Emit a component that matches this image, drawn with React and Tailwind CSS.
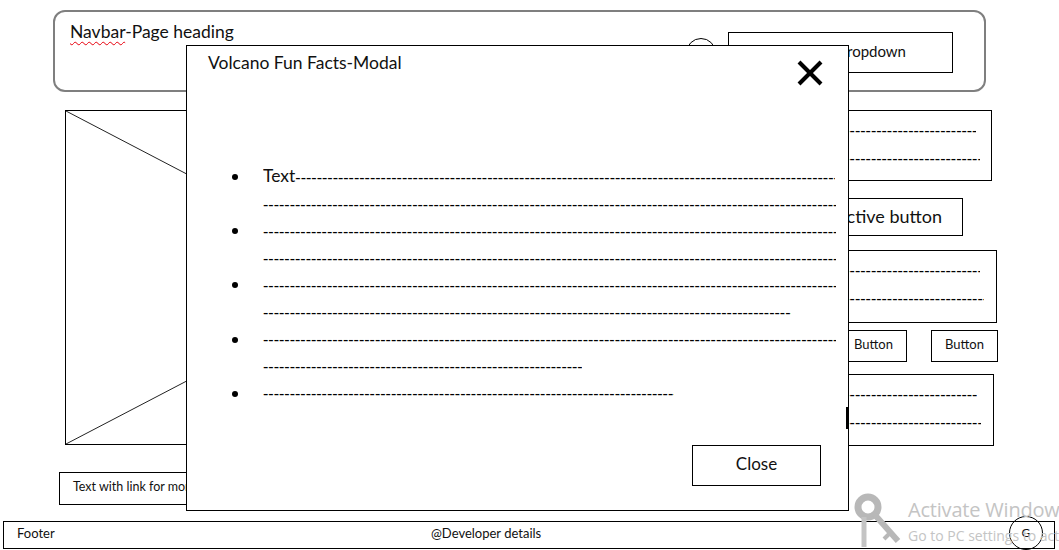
import React from "react";

const DASHES = "-".repeat(140);

function Dash({ w }) {
  return (
    <span
      className="inline-block overflow-hidden whitespace-nowrap align-baseline font-['Liberation_Sans',sans-serif] text-[16px] text-black"
      style={{ width: w }}
    >
      {DASHES}
    </span>
  );
}

function Line({ children }) {
  return (
    <div className="flex h-[27.1px] items-center whitespace-nowrap leading-[27.1px]">
      {children}
    </div>
  );
}

function Item({ lines }) {
  return (
    <div className="flex pl-[45px]">
      <div className="flex h-[27.1px] w-[31px] shrink-0 items-center">
        <div className="h-[6px] w-[6px] rounded-full bg-black" />
      </div>
      <div className="flex flex-col">{lines}</div>
    </div>
  );
}

function DashBox({ w, h, mt, l1, l2 }) {
  return (
    <div
      className="flex flex-col border border-black pl-[14px] pt-[6px]"
      style={{ width: w, height: h, marginTop: mt }}
    >
      <div className="flex h-[28px] items-center">
        <Dash w={l1} />
      </div>
      <div className="flex h-[28px] items-center">
        <Dash w={l2} />
      </div>
    </div>
  );
}

export default function App() {
  return (
    <div className="relative h-[550px] w-[1059px] overflow-hidden bg-white font-['Lato',sans-serif] text-[#111]">
      {/* Navbar */}
      <div className="ml-[53px] mt-[10px] flex h-[82px] w-[933px] justify-between rounded-[12px] border-2 border-[#7f7f7f]">
        <div className="pl-[15px] pt-[9px] text-[17.5px] leading-[22px]">
          <span className="underline decoration-red-600 decoration-wavy decoration-[1px] underline-offset-[3px]">
            Navbar
          </span>
          -Page heading
        </div>
        <div className="flex items-center gap-[12px] self-start pr-[31px] pt-[20px]">
          <div className="h-[30px] w-[30px] rounded-full border border-black" />
          <div className="flex h-[41px] w-[225px] items-center justify-end border border-black pb-[3px] pr-[46px] text-[15px]">
            Language Dropdown
          </div>
        </div>
      </div>

      {/* Main */}
      <div className="mt-[18px] flex">
        <div className="ml-[65px] w-[640px]">
          <div className="h-[335px] w-full border border-black">
            <svg
              className="block h-full w-full"
              viewBox="0 0 100 100"
              preserveAspectRatio="none"
            >
              <line x1="0" y1="0" x2="100" y2="100" stroke="#222" strokeWidth="1" vectorEffect="non-scaling-stroke" />
              <line x1="0" y1="100" x2="100" y2="0" stroke="#222" strokeWidth="1" vectorEffect="non-scaling-stroke" />
            </svg>
          </div>
          <div className="ml-[-6px] mt-[27px] flex h-[33px] w-[300px] items-center border border-black pb-[2px] pl-[13px] text-[12.5px]">
            Text with link for more information
          </div>
        </div>

        <div className="ml-[23px] flex w-[272px] flex-col">
          <DashBox w={264} h={71} mt={0} l1={233} l2={237} />
          <div className="mt-[17px] flex h-[38px] w-[235px] items-center justify-end border border-black pb-[2px] pr-[20px] text-[18px]">
            Active button
          </div>
          <DashBox w={269} h={73} mt={14} l1={237} l2={241} />
          <div className="mt-[7px] flex gap-[24px] pl-[112px]">
            <div className="flex h-[32px] w-[67px] items-center justify-center border border-black pb-[2px] text-[13px]">
              Button
            </div>
            <div className="flex h-[32px] w-[67px] items-center justify-center border border-black pb-[2px] text-[13px]">
              Button
            </div>
          </div>
          <DashBox w={266} h={72} mt={12} l1={234} l2={238} />
        </div>
      </div>

      {/* Footer */}
      <div className="relative ml-[3px] mt-[16px] flex h-[28px] w-[1052px] items-center border border-black pb-[2px] text-[13px]">
        <div className="w-[427px] pl-[13px]">Footer</div>
        <div>@Developer details</div>
        <div className="absolute right-[11px] top-[-6px] flex h-[34px] w-[34px] items-center justify-center rounded-full border border-black pb-[1px] text-[12px]">
          G
        </div>
      </div>

      {/* Modal */}
      <div className="absolute left-[186px] top-[45px] flex h-[466px] w-[663px] flex-col border border-black bg-white">
        <div className="flex h-[40px] items-start justify-between pl-[21px] pr-[25px] pt-[6px]">
          <div className="text-[17.5px] leading-[22px]">Volcano Fun Facts-Modal</div>
          <svg className="mt-[8px]" width="26" height="26" viewBox="0 0 26 26">
            <line x1="2" y1="2" x2="24" y2="24" stroke="#000" strokeWidth="4" />
            <line x1="24" y1="2" x2="2" y2="24" stroke="#000" strokeWidth="4" />
          </svg>
        </div>

        <div className="mt-[77.5px] flex flex-col text-[17.5px]">
          <Item
            lines={[
              <Line key="a">
                <span className="inline-flex w-[573px] items-baseline overflow-hidden">
                  <span className="relative top-[-1px]">Text</span>
                  <Dash w={540} />
                </span>
              </Line>,
              <Line key="b">
                <Dash w={573} />
              </Line>,
            ]}
          />
          <Item
            lines={[
              <Line key="a"><Dash w={573} /></Line>,
              <Line key="b"><Dash w={573} /></Line>,
            ]}
          />
          <Item
            lines={[
              <Line key="a"><Dash w={573} /></Line>,
              <Line key="b"><Dash w={528} /></Line>,
            ]}
          />
          <Item
            lines={[
              <Line key="a"><Dash w={573} /></Line>,
              <Line key="b"><Dash w={319} /></Line>,
            ]}
          />
          <Item lines={[<Line key="a"><Dash w={411} /></Line>]} />
        </div>

        <div className="mt-auto flex justify-end pb-[24px] pr-[27px]">
          <div className="flex h-[41px] w-[129px] items-center justify-center border border-black pb-[3px] text-[17px]">
            Close
          </div>
        </div>

        <div className="absolute left-[659px] top-[361px] h-[22px] w-[2px] bg-black" />
      </div>

      {/* Activation watermark */}
      <div className="pointer-events-none absolute left-[852px] top-[493px] flex">
        <svg width="52" height="56" viewBox="0 0 52 56">
          <circle cx="16" cy="14" r="10" fill="none" stroke="#b8b8b8" strokeWidth="7" />
          <line x1="23" y1="22" x2="46" y2="48" stroke="#b8b8b8" strokeWidth="6" />
          <line x1="38" y1="40" x2="32" y2="46" stroke="#b8b8b8" strokeWidth="4" />
          <line x1="12" y1="24" x2="12" y2="54" stroke="#c4c4c4" strokeWidth="5" />
        </svg>
        <div className="ml-[4px] mt-[5px] flex flex-col whitespace-nowrap font-['Open_Sans',sans-serif] text-[#c4c4c4]">
          <div className="text-[20px] leading-[24px] tracking-[-0.2px]">Activate Windows</div>
          <div className="mt-[5px] text-[14px] leading-[18px]">Go to PC settings to activate Windows.</div>
        </div>
      </div>
    </div>
  );
}
